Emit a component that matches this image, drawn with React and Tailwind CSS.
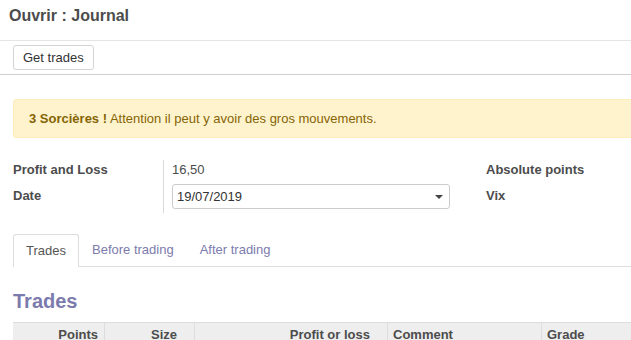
export default function App() {
  const font = { fontFamily: '"Liberation Sans", Arial, sans-serif' };
  return (
    <div className="w-[631px] h-[340px] overflow-hidden bg-white text-[13px] text-[#4c4c4c]" style={font}>
      <div className="h-[41px] border-b border-[#e5e5e5] pl-[9px] pt-[6px]">
        <div className="text-[16px] leading-[20px] font-bold text-[#4c4c4c]">Ouvrir : Journal</div>
      </div>
      <div className="h-[34px] border-b border-[#cfcfcf] pl-[13px] pt-[4px]">
        <button className="h-[25px] px-[9px] border border-[#d4d4d4] rounded-[3px] bg-white text-[13px] leading-[18px] text-[#333]">
          Get trades
        </button>
      </div>
      <div className="w-[660px] pl-[13px] pt-[24px]">
        <div className="h-[39px] bg-[#fff3cd] border border-[#ffeeba] rounded-[3px] pl-[15px] flex items-center text-[#856404] leading-[18px]">
          <span><b>3 Sorcières !</b> Attention il peut y avoir des gros mouvements.</span>
        </div>
      </div>
      <div className="flex pl-[13px] pt-[22px]">
        <div className="flex w-[473px]">
          <div className="w-[151px] border-r border-[#d9d9d9] pb-[4px] font-bold">
            <div className="h-[24px] pt-[1px] leading-[18px]">Profit and Loss</div>
            <div className="h-[25px] pt-[3px] leading-[18px]">Date</div>
          </div>
          <div className="pl-[8px]">
            <div className="h-[24px] pt-[1px] leading-[18px]">16,50</div>
            <div className="h-[25px] w-[278px] border border-[#cccccc] rounded-[3px] flex items-center justify-between pl-[4px] pr-[6px] text-[#333]">
              <span className="leading-[18px]">19/07/2019</span>
              <span className="w-0 h-0 border-l-[4px] border-r-[4px] border-t-[4px] border-l-transparent border-r-transparent border-t-[#444] mt-[1px]"></span>
            </div>
          </div>
        </div>
        <div className="font-bold">
          <div className="h-[24px] pt-[1px] leading-[18px]">Absolute points</div>
          <div className="h-[25px] pt-[3px] leading-[18px]">Vix</div>
        </div>
      </div>
      <div className="mt-[21px] ml-[13px] flex border-b border-[#dddddd] h-[33px]">
        <div className="h-[33px] px-[12px] border border-b-0 border-[#dddddd] rounded-t-[3px] bg-white flex items-center text-[#555] leading-[18px] -mb-px">Trades</div>
        <div className="px-[13px] flex items-center text-[#7c7bad] leading-[18px]">Before trading</div>
        <div className="px-[13px] flex items-center text-[#7c7bad] leading-[18px]">After trading</div>
      </div>
      <div className="ml-[13px] mt-[22px] text-[20px] leading-[24px] font-bold text-[#7c7bad]">Trades</div>
      <div className="ml-[13px] mt-[9px] flex bg-[#eeeeee] border-t border-[#dddddd] font-bold text-[#4c4c4c] h-[30px] w-[640px]">
        <div className="w-[92px] border-r border-[#dddddd] text-right pr-[6px] pt-[3px] leading-[18px]">Points</div>
        <div className="w-[90px] border-r border-[#dddddd] text-right pr-[17px] pt-[3px] leading-[18px]">Size</div>
        <div className="w-[193px] border-r border-[#dddddd] text-right pr-[17px] pt-[3px] leading-[18px]">Profit or loss</div>
        <div className="w-[154px] border-r border-[#dddddd] pl-[5px] pt-[3px] leading-[18px]">Comment</div>
        <div className="flex-1 pl-[5px] pt-[3px] leading-[18px]">Grade</div>
      </div>
    </div>
  );
}
